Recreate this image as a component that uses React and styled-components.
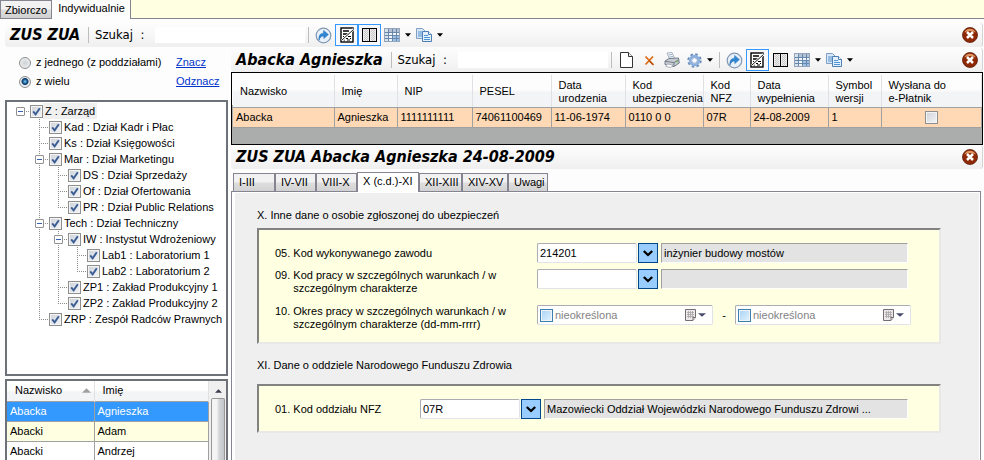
import React from "react";
import styled, { createGlobalStyle, css } from "styled-components";

const GlobalStyle = createGlobalStyle`
  * { box-sizing: border-box; }
  body { margin: 0; background: #fff; }
  body, input, button, table {
    font-family: "Liberation Sans", Arial, sans-serif;
    font-size: 11px;
    line-height: 13px;
    color: #000;
  }
`;

const tick =
  "url(\"data:image/svg+xml,%3Csvg xmlns='http://www.w3.org/2000/svg' viewBox='0 0 9 9'%3E%3Cpath d='M1.2 4.4L3.6 7.4L7.8 1.2' fill='none' stroke='%23395d95' stroke-width='1.9'/%3E%3C/svg%3E\")";

/* ---------- shell ---------- */

const Shell = styled.div`
  display: flex;
  flex-direction: column;
  height: 100vh;
  overflow: hidden;
  background: #fdfdfd;
`;

const PageTabs = styled.nav`
  display: flex;
  align-items: stretch;
  height: 19px;
  flex: none;
  background: #ffffe1;
`;

const PageTab = styled.button`
  border: 0 solid #848590;
  border-bottom-width: ${(p) => (p.$active ? 0 : "1px")};
  border-left-width: ${(p) => (p.$active ? 0 : "1px")};
  border-right-width: 1px;
  border-top-width: ${(p) => (p.$active ? 0 : "1px")};
  padding: ${(p) => (p.$active ? "0 5px 2px 6px" : "1px 4px 0")};
  background: ${(p) => (p.$active ? "#fdfdfd" : "linear-gradient(#f2f2f2 45%, #dcdcdc 55%, #d0d0d0)")};
`;

const PageTabsFill = styled.div`
  flex: 1;
  border-bottom: 1px solid #848590;
`;

const Body = styled.div`
  display: flex;
  flex: 1;
  min-height: 0;
`;

const Side = styled.aside`
  display: flex;
  flex-direction: column;
  flex: none;
  width: 231px;
  padding: 5px 3px 0 5px;
`;

const Main = styled.main`
  display: flex;
  flex-direction: column;
  flex: 1;
  min-width: 0;
`;

/* ---------- toolbar ---------- */

const Bar = styled.header`
  display: flex;
  align-items: center;
  flex: none;
  height: 24px;
  margin: ${(p) => (p.$outer ? "4px 1px 1px 5px" : "0 1px 0 0")};
  padding: 0 1px 0 5px;
  background: linear-gradient(#fdfdfd, #f7f7f7 50%, #efefef);
  border-right: 1px solid #d4d4d4;
  border-radius: 3px;
`;

const Title = styled.h2`
  margin: 0;
  padding-right: 2px;
  font: italic bold 16px/22px "DejaVu Sans Condensed", "DejaVu Sans", sans-serif;
  white-space: nowrap;
`;

const Divider = styled.span`
  flex: none;
  width: 1px;
  height: 16px;
  margin: 0 ${(p) => (p.$wide ? 6 : 3)}px;
  background: #bdbdbd;
`;

const SearchLabel = styled.label`
  font: 13px/16px "DejaVu Sans Condensed", "DejaVu Sans", sans-serif;
  white-space: pre;
`;

const SearchInput = styled.input`
  flex: none;
  width: 150px;
  height: 16px;
  margin-left: 11px;
  padding: 0 2px;
  border: 0;
  background: #fff;
`;

const ToolButton = styled.button`
  display: flex;
  align-items: center;
  justify-content: center;
  flex: none;
  width: 23px;
  height: 22px;
  padding: 0;
  border: 1px solid ${(p) => (p.$on ? "#3399ff" : "transparent")};
  background: ${(p) => (p.$on ? "#f6f8fb" : "transparent")};
`;

const MenuButton = styled(ToolButton)`
  width: 32px;
  gap: 5px;
`;

const Spacer = styled.span`
  flex: 1;
`;

/* ---------- filter and tree ---------- */

const Filter = styled.div`
  display: grid;
  grid-template-columns: 157px auto;
  grid-auto-rows: 19px;
  align-items: center;
  flex: none;
  padding: 0 0 9px 14px;
`;

const RadioLabel = styled.label`
  display: flex;
  align-items: center;
  gap: 5px;
  white-space: nowrap;
`;

const Radio = styled.input`
  appearance: none;
  flex: none;
  width: 12px;
  height: 12px;
  margin: 0;
  border: 1px solid #8e8f8f;
  border-radius: 50%;
  background: radial-gradient(#cfd3d6, #f4f4f4);
  &:checked {
    background: radial-gradient(circle at 50% 45%, #7fd0f2 0, #1e5f9c 2px, #12395f 3px, #e6ebef 4px);
  }
`;

const Link = styled.a`
  color: #0033cc;
  text-decoration: underline;
`;

const Check = styled.input`
  appearance: none;
  flex: none;
  width: 13px;
  height: 13px;
  margin: 0;
  border: 1px solid ${(p) => (p.$blue ? "#3c7fb1" : "#8e8f8f")};
  box-shadow: inset 0 0 0 1px #f4f4f4;
  background: ${(p) =>
    p.$blue ? "linear-gradient(135deg, #a8d2f5, #e2f4ff)" : "linear-gradient(135deg, #cdd2d8, #f4f5f6)"};
  &:checked {
    background: ${tick} center / 9px 9px no-repeat, linear-gradient(135deg, #cdd2d8, #f4f5f6);
  }
`;

const TreeBox = styled.div`
  flex: none;
  height: 276px;
  padding: 1px 0 0 9px;
  border: 2px solid #6d7278;
  background: #fff;
`;

const dots = (dir) => `repeating-linear-gradient(${dir}, #8c8c8c 0 1px, transparent 1px 2px)`;

const Branch = styled.ul`
  list-style: none;
  margin: 0 0 0 ${(p) => (p.$root ? 0 : "19px")};
  padding: 0;
  ${(p) =>
    !p.$root &&
    css`
      & > li {
        background: ${dots("to bottom")} 4px 0 / 1px 100% no-repeat;
      }
      & > li:last-child {
        background-size: 1px 8px;
      }
    `}
`;

const NodeRow = styled.div`
  display: flex;
  align-items: center;
  height: 16px;
  background: ${dots("to right")} 4px 8px / 10px 1px no-repeat;
`;

const Toggle = styled.button`
  display: flex;
  align-items: center;
  justify-content: center;
  flex: none;
  width: 9px;
  height: 9px;
  margin-right: 5px;
  padding: 0;
  border: 1px solid #919191;
  border-radius: 1px;
  background: #fff;
`;

const NoToggle = styled.span`
  flex: none;
  width: 14px;
`;

const NodeLabel = styled.label`
  display: flex;
  align-items: center;
  white-space: nowrap;
`;

const NodeText = styled.span`
  padding: 1px 2px;
  line-height: 14px;
  background: ${(p) => (p.$current ? "#f0f0f0" : "transparent")};
`;

/* ---------- people list ---------- */

const ListBox = styled.div`
  display: flex;
  flex: 1;
  min-height: 0;
  overflow: hidden;
  margin-top: 3px;
  border: 2px solid #6d7278;
  border-bottom: 0;
  background: #fff;
`;

const List = styled.table`
  flex: 1;
  align-self: flex-start;
  table-layout: fixed;
  width: 100%;
  border-collapse: collapse;
  th {
    height: 20px;
    padding: 0 3px 0 8px;
    border-right: 1px solid #dfe1e4;
    background: linear-gradient(#fff 45%, #f3f4f6 55%);
    font-weight: normal;
    text-align: left;
  }
  td {
    height: 20px;
    padding: 0 3px;
    border: 1px solid #a0a0a0;
    border-left: 0;
  }
`;

const ListRow = styled.tr`
  background: ${(p) => (p.$selected ? "#3399ff" : p.$tinted ? "#ffffe1" : "#fff")};
  color: ${(p) => (p.$selected ? "#fff" : "#000")};
`;

const SortHead = styled.span`
  display: flex;
  align-items: center;
  justify-content: space-between;
`;

const Scroll = styled.div`
  display: flex;
  flex-direction: column;
  flex: none;
  width: 17px;
  padding: 0 1px 0 2px;
  background: #f0f0f0;
`;

const ScrollUp = styled.button`
  height: 17px;
  padding: 0;
  border: 0;
  background: transparent;
`;

const ScrollThumb = styled.div`
  flex: 1;
  border: 1px solid #979797;
  border-bottom: 0;
  border-radius: 2px 2px 0 0;
  background: linear-gradient(to right, #f4f4f4 40%, #d2d4d6 60%, #c4c7ca);
`;

/* ---------- records grid ---------- */

const RecordsBox = styled.div`
  flex: none;
  height: 73px;
  margin-right: 1px;
  border: 1px solid #000;
  padding: 2px 0 0 1px;
  background: linear-gradient(#fdfdfd 32px, #abadac 32px);
`;

const Records = styled.table`
  width: 100%;
  table-layout: fixed;
  border-collapse: collapse;
  white-space: nowrap;
  th {
    height: 32px;
    padding: 2px 0 0 7px;
    border-right: 1px solid #dfe1e4;
    border-bottom: 1px solid #a0a0a0;
    background: linear-gradient(#fdfdfd 45%, #f3f4f6 55%);
    font-weight: normal;
    text-align: left;
    white-space: pre-line;
  }
  td {
    height: 20px;
    padding: 0 3px;
    border-right: 1px solid #a0a0a0;
    border-bottom: 1px solid #a0a0a0;
    background: #ffd8b5;
  }
  td:last-child {
    text-align: center;
    line-height: 0;
  }
`;

const Col = styled.col`
  width: ${(p) => (p.$w ? `${p.$w}px` : "auto")};
`;

/* ---------- record form ---------- */

const FormTabs = styled.nav`
  display: flex;
  align-items: flex-end;
  flex: none;
  height: 22px;
  padding-left: 2px;
`;

const FormTab = styled.button`
  width: ${(p) => p.$w}px;
  height: ${(p) => (p.$active ? "20px" : "18px")};
  margin-bottom: ${(p) => (p.$active ? "-1px" : 0)};
  padding: 0 0 ${(p) => (p.$active ? "2px" : 0)} 5px;
  border: 1px solid #848590;
  border-bottom: 0;
  background: ${(p) => (p.$active ? "#fff" : "linear-gradient(#f2f2f2 45%, #dddddd 55%, #d2d2d2)")};
  text-align: left;
  white-space: nowrap;
  z-index: ${(p) => (p.$active ? 1 : 0)};
`;

const FormPage = styled.section`
  flex: 1;
  margin-right: 3px;
  padding: 17px 39px 0 22px;
  border: 1px solid #848590;
  border-bottom: 0;
  background: #efefef;
  box-shadow: inset 3px 0 0 #fff, inset -1px 1px 0 #fff;
`;

const Caption = styled.h3`
  margin: 0 0 ${(p) => p.$gap}px 3px;
  font-size: 11px;
  font-weight: normal;
  line-height: 13px;
`;

const Group = styled.div`
  display: flex;
  flex-direction: column;
  margin: 0 0 ${(p) => (p.$last ? 0 : "15px")} 3px;
  padding: 13px 31px ${(p) => (p.$last ? "12px" : "17px")} 16px;
  border: 2px solid;
  border-color: #828282 #e8e8e8 #e8e8e8 #828282;
  background: #ffffe1;
`;

const FieldRow = styled.div`
  display: flex;
  align-items: flex-start;
  height: ${(p) => p.$h}px;
`;

const FieldLabel = styled.label`
  display: flex;
  flex: none;
  gap: 3px;
  width: ${(p) => p.$w}px;
  padding-top: ${(p) => (p.$two ? 0 : "4px")};
  white-space: pre-line;
`;

const Field = styled.input`
  flex: none;
  width: 100px;
  height: 20px;
  padding: 0 2px;
  border: 1px solid;
  border-color: #abadb3 #e2e3ea #e2e3ea #abadb3;
  border-radius: 2px;
  background: #fff;
`;

const ReadOnly = styled.input`
  flex: 1;
  min-width: 0;
  height: 20px;
  margin-left: 3px;
  padding: 0 2px;
  border: 1px solid;
  border-color: #a0a0a0 #fff #fff #a0a0a0;
  background: #e2e3e2;
`;

const DropButton = styled.button`
  display: flex;
  align-items: center;
  justify-content: center;
  flex: none;
  width: 20px;
  height: 20px;
  margin-left: 1px;
  padding: 0;
  border: 1px solid #00478c;
  background: #99ccff;
`;

const DateBox = styled.div`
  display: flex;
  align-items: center;
  flex: none;
  width: 176px;
  height: 20px;
  padding: 0 6px 0 2px;
  border: 1px solid;
  border-color: #abadb3 #e2e3ea #e2e3ea #abadb3;
  border-radius: 2px;
  background: #fff;
`;

const DateInput = styled.input`
  flex: 1;
  min-width: 0;
  padding: 0 2px;
  border: 0;
  background: transparent;
  color: #838383;
`;

const DateButton = styled.button`
  display: flex;
  align-items: center;
  gap: 2px;
  padding: 0;
  border: 0;
  background: transparent;
`;

const Dash = styled.span`
  flex: none;
  width: 22px;
  padding-top: 4px;
  text-align: center;
`;

/* ---------- icons ---------- */

const RefreshIcon = () => (
  <svg width="17" height="17" viewBox="0 0 17 17" aria-hidden="true">
    <circle cx="8.5" cy="8.5" r="7.3" fill="#e9f1fa" stroke="#8498b4" strokeWidth="1.2" />
    <path d="M4 13.2C3.6 8.6 5 6.4 8.6 6.2V3.4L13.4 7.6L8.8 11.6V9C6.4 9 5 10.2 4 13.2Z" fill="#2f87d4" stroke="#1c68b4" strokeWidth=".5" />
  </svg>
);

const FormIcon = () => (
  <svg width="14" height="16" viewBox="0 0 14 16" aria-hidden="true">
    <rect x="1" y="1" width="12" height="14" fill="#fff" stroke="#000" strokeWidth="1.4" />
    <path d="M3 4H9M3 7H8" stroke="#000" strokeWidth="1.6" />
    <path d="M8 9.5H11M3 9.5H4M6 11.5H8M10 11.5H11M3 13H5M7 13H10" stroke="#000" />
    <path d="M13.5 2L2 13.5" stroke="#fff" strokeWidth="2.4" />
    <path d="M13.5 2.5L2 13" stroke="#000" strokeWidth=".9" />
  </svg>
);

const SplitIcon = () => (
  <svg width="15" height="14" viewBox="0 0 15 14" shapeRendering="crispEdges" aria-hidden="true">
    <rect x="0" y="0" width="15" height="14" fill="#000" />
    <rect x="1" y="1" width="6" height="12" fill="#ececec" />
    <rect x="8" y="1" width="6" height="12" fill="#ececec" />
    <path d="M2.5 1V13M4.5 1V13M9.5 1V13M11.5 1V13" stroke="#c8c8c8" strokeDasharray="1 1" />
    <path d="M3.5 2V13M5.5 2V13M10.5 2V13M12.5 2V13" stroke="#c8c8c8" strokeDasharray="1 1" />
  </svg>
);

const TableIcon = () => (
  <svg width="16" height="14" viewBox="0 0 16 14" aria-hidden="true">
    <rect x=".5" y=".5" width="15" height="13" fill="#f3f7fc" stroke="#93a5bd" />
    <path d="M1 1H15V4H1Z" fill="#b4c2d4" />
    <path d="M1 1H4V13H1Z" fill="#d9e1ea" />
    <path d="M9 7H15V13H9Z" fill="#9dc0e6" />
    <path d="M4.5 1V13M8.5 1V13M12.5 1V13M1 4.5H15M1 7.5H15M1 10.5H15" stroke="#6887ac" />
  </svg>
);

const CopyIcon = () => (
  <svg width="16" height="14" viewBox="0 0 16 14" aria-hidden="true">
    <path d="M.5 .5H6.5L9.5 3.5V10.5H.5Z" fill="#d6e7f8" stroke="#7f9fc4" />
    <path d="M2 4H6M2 6H6M2 8H6" stroke="#5b93cb" />
    <path d="M6.5 3.5H12.5L15.5 6.5V13.5H6.5Z" fill="#e4f0fb" stroke="#4d7fb4" />
    <path d="M12.5 3.5V6.5H15.5" fill="#fff" stroke="#4d7fb4" />
    <path d="M8 7.5H12M8 9.5H14M8 11.5H14" stroke="#4f95d6" />
  </svg>
);

const PageIcon = () => (
  <svg width="13" height="16" viewBox="0 0 13 16" aria-hidden="true">
    <path d="M.5 .5H8.5L12.5 4.5V15.5H.5Z" fill="#fff" stroke="#333" />
    <path d="M8.5 .5V4.5H12.5" fill="#eee" stroke="#333" />
  </svg>
);

const DeleteIcon = () => (
  <svg width="11" height="11" viewBox="0 0 11 11" aria-hidden="true">
    <path d="M1.5 1.5L9 9.5M9 1.5L1.5 9.5" stroke="#dd6b14" strokeWidth="1.8" />
    <path d="M5 5.5L9.5 10" stroke="#b84d08" strokeWidth="1.2" />
  </svg>
);

const PrintIcon = () => (
  <svg width="16" height="16" viewBox="0 0 16 16" aria-hidden="true">
    <path d="M3 1L8 .5L10.5 6L6 8Z" fill="#f5f8fb" stroke="#a9b3bf" />
    <path d="M4.5 3L8 2.4M5.3 5L9 4.4" stroke="#9fb6ce" />
    <path d="M1 9L5 6.5L14.5 6L15.3 11L10 14.5L1 12.5Z" fill="#c6cbd3" stroke="#747d8a" />
    <path d="M1 9.2L10 10.6L15 7.5M10 10.6V14" stroke="#777f8b" fill="none" />
    <path d="M3 12L9 13L7 15.5L2 14.5Z" fill="#fff" stroke="#929aa5" strokeWidth=".7" />
    <circle cx="13" cy="9.6" r=".9" fill="#73bd50" />
  </svg>
);

const GearIcon = () => (
  <svg width="15" height="15" viewBox="0 0 15 15" aria-hidden="true">
    <circle cx="7.5" cy="7.5" r="6.2" fill="none" stroke="#6d8fc0" strokeWidth="2" strokeDasharray="2.6 2.27" />
    <circle cx="7.5" cy="7.5" r="4.4" fill="#fff" stroke="#8cb0dd" strokeWidth="2.6" />
    <circle cx="7.5" cy="7.5" r="2.8" fill="#f7faff" stroke="#6588bb" strokeWidth=".7" />
  </svg>
);

const CloseIcon = () => (
  <svg width="16" height="16" viewBox="0 0 16 16" aria-hidden="true">
    <circle cx="8" cy="8" r="7.5" fill="#8e2806" stroke="#5f1d0a" strokeWidth=".8" />
    <path d="M2.2 5.5A6.3 6.3 0 0 1 13.8 5.5Q8 2.5 2.2 5.5Z" fill="#dc9460" />
    <path d="M5 5L11 11M11 5L5 11" stroke="#fff" strokeWidth="2.5" />
  </svg>
);

const Caret = ({ color = "#000", size = 6 }) => (
  <svg width={size} height="4" viewBox="0 0 6 4" preserveAspectRatio="none" aria-hidden="true">
    <path d="M0 .3H6L3 3.7Z" fill={color} />
  </svg>
);

const UpCaret = ({ color, width, height }) => (
  <svg width={width} height={height} viewBox="0 0 8 4" aria-hidden="true">
    <path d="M0 4L4 0L8 4Z" fill={color} />
  </svg>
);

const MinusIcon = () => (
  <svg width="5" height="1" viewBox="0 0 5 1" aria-hidden="true">
    <path d="M0 .5H5" stroke="#3a5fae" />
  </svg>
);

const ChevronIcon = () => (
  <svg width="10" height="7" viewBox="0 0 10 7" aria-hidden="true">
    <path d="M.8 1L5 5L9.2 1" fill="none" stroke="#000" strokeWidth="2.3" />
  </svg>
);

const CalendarIcon = () => (
  <svg width="11" height="12" viewBox="0 0 11 12" aria-hidden="true">
    <path d="M.5 .5H10.5V8.5L8 11.5H.5Z" fill="#ece9e9" stroke="#756d70" />
    <path d="M2 3.5H9M2 5.5H9M2 7.5H9M3.5 2V9M5.5 2V9M7.5 2V9" stroke="#aaa5a6" strokeWidth=".8" />
    <path d="M8 11V8.5H10.5" fill="#fff" stroke="#756d70" />
  </svg>
);

/* ---------- composition ---------- */

const ViewTools = ({ splitOn }) => (
  <>
    <Divider />
    <ToolButton aria-label="Odśwież"><RefreshIcon /></ToolButton>
    <ToolButton aria-label="Formularz" $on><FormIcon /></ToolButton>
    <ToolButton aria-label="Podział" $on={splitOn}><SplitIcon /></ToolButton>
    <MenuButton aria-label="Tabela"><TableIcon /><Caret /></MenuButton>
    <MenuButton aria-label="Kopiuj"><CopyIcon /><Caret /></MenuButton>
  </>
);

const CloseButton = () => (
  <>
    <Spacer />
    <ToolButton aria-label="Zamknij"><CloseIcon /></ToolButton>
  </>
);

const Search = ({ id }) => (
  <>
    <Divider $wide />
    <SearchLabel htmlFor={id}>{"Szukaj  :"}</SearchLabel>
    <SearchInput id={id} />
  </>
);

const tree = [
  {
    name: "Z : Zarząd",
    current: true,
    children: [
      { name: "Kad : Dział Kadr i Płac" },
      { name: "Ks : Dział Księgowości" },
      {
        name: "Mar : Dział Marketingu",
        children: [
          { name: "DS : Dział Sprzedaży" },
          { name: "Of : Dział Ofertowania" },
          { name: "PR : Dział Public Relations" },
        ],
      },
      {
        name: "Tech : Dział Techniczny",
        children: [
          {
            name: "IW : Instystut Wdrożeniowy",
            children: [{ name: "Lab1 : Laboratorium 1" }, { name: "Lab2 : Laboratorium 2" }],
          },
          { name: "ZP1 : Zakład Produkcyjny 1" },
          { name: "ZP2 : Zakład Produkcyjny 2" },
        ],
      },
      { name: "ZRP : Zespół Radców Prawnych" },
    ],
  },
];

const Tree = ({ nodes, root }) => (
  <Branch $root={root}>
    {nodes.map((n) => (
      <li key={n.name}>
        <NodeRow>
          {n.children ? <Toggle aria-label={`Zwiń ${n.name}`}><MinusIcon /></Toggle> : <NoToggle />}
          <NodeLabel>
            <Check type="checkbox" defaultChecked />
            <NodeText $current={n.current}>{n.name}</NodeText>
          </NodeLabel>
        </NodeRow>
        {n.children && <Tree nodes={n.children} />}
      </li>
    ))}
  </Branch>
);

const people = [
  ["Abacka", "Agnieszka"],
  ["Abacki", "Adam"],
  ["Abacki", "Andrzej"],
];

const columns = [
  ["Nazwisko", 101, "Abacka"],
  ["Imię", 63, "Agnieszka"],
  ["NIP", 75, "1111111111"],
  ["PESEL", 79, "74061100469"],
  ["Data\nurodzenia", 74, "11-06-1974"],
  ["Kod\nubezpieczenia", 78, "0110 0 0"],
  ["Kod\nNFZ", 47, "07R"],
  ["Data\nwypełnienia", 78, "24-08-2009"],
  ["Symbol\nwersji", 53, "1"],
  ["Wysłana do\ne-Płatnik", null, null],
];

const formTabs = [
  ["I-III", 42],
  ["IV-VII", 41],
  ["VIII-X", 41],
  ["X (c.d.)-XI", 62],
  ["XII-XIII", 43],
  ["XIV-XV", 46],
  ["Uwagi", 40],
];

const CodeField = ({ id, code, text, name }) => (
  <>
    <Field id={id} defaultValue={code} />
    <DropButton aria-label={`Wybierz: ${name}`}><ChevronIcon /></DropButton>
    <ReadOnly readOnly value={text} aria-label={`Opis: ${name}`} />
  </>
);

const DateField = ({ id, name }) => (
  <DateBox>
    <Check type="checkbox" $blue aria-label={`${name} określona`} />
    <DateInput id={id} defaultValue="nieokreślona" aria-label={name} />
    <DateButton aria-label={`Kalendarz: ${name}`}>
      <CalendarIcon />
      <Caret color="#4a4a6c" size={8} />
    </DateButton>
  </DateBox>
);

export default function App() {
  return (
    <Shell>
      <GlobalStyle />
      <PageTabs>
        <PageTab>Zbiorczo</PageTab>
        <PageTab $active>Indywidualnie</PageTab>
        <PageTabsFill />
      </PageTabs>
      <Bar $outer>
        <Title as="h1">ZUS ZUA</Title>
        <Search id="search-all" />
        <ViewTools splitOn />
        <CloseButton />
      </Bar>
      <Body>
        <Side>
          <Filter>
            <RadioLabel><Radio type="radio" name="scope" />z jednego (z poddziałami)</RadioLabel>
            <div><Link href="#znacz">Znacz</Link></div>
            <RadioLabel><Radio type="radio" name="scope" defaultChecked />z wielu</RadioLabel>
            <div><Link href="#odznacz">Odznacz</Link></div>
          </Filter>
          <TreeBox><Tree nodes={tree} root /></TreeBox>
          <ListBox>
            <List>
              <colgroup><Col $w={87} /><Col /></colgroup>
              <thead>
                <tr>
                  <th><SortHead>Nazwisko<UpCaret color="#a0a0a0" width="9" height="5" /></SortHead></th>
                  <th>Imię</th>
                </tr>
              </thead>
              <tbody>
                {people.map(([last, first], i) => (
                  <ListRow key={first} $selected={i === 0} $tinted={i % 2 === 1}>
                    <td>{last}</td>
                    <td>{first}</td>
                  </ListRow>
                ))}
              </tbody>
            </List>
            <Scroll>
              <ScrollUp aria-label="W górę"><UpCaret color="#3c3c4c" width="7" height="4" /></ScrollUp>
              <ScrollThumb />
            </Scroll>
          </ListBox>
        </Side>
        <Main>
          <Bar>
            <Title>Abacka Agnieszka</Title>
            <Search id="search-person" />
            <Divider />
            <ToolButton aria-label="Nowy"><PageIcon /></ToolButton>
            <ToolButton aria-label="Usuń"><DeleteIcon /></ToolButton>
            <ToolButton aria-label="Drukuj"><PrintIcon /></ToolButton>
            <MenuButton aria-label="Czynności"><GearIcon /><Caret /></MenuButton>
            <ViewTools />
            <CloseButton />
          </Bar>
          <RecordsBox>
            <Records>
              <colgroup>{columns.map(([name, w]) => <Col key={name} $w={w} />)}</colgroup>
              <thead>
                <tr>{columns.map(([name]) => <th key={name}>{name}</th>)}</tr>
              </thead>
              <tbody>
                <tr>
                  {columns.map(([name, , value]) => (
                    <td key={name}>{value ?? <Check type="checkbox" aria-label="Wysłana do e-Płatnik" />}</td>
                  ))}
                </tr>
              </tbody>
            </Records>
          </RecordsBox>
          <Bar>
            <Title>ZUS ZUA Abacka Agnieszka 24-08-2009</Title>
            <CloseButton />
          </Bar>
          <FormTabs>
            {formTabs.map(([name, w]) => (
              <FormTab key={name} $w={w} $active={name === "X (c.d.)-XI"}>{name}</FormTab>
            ))}
          </FormTabs>
          <FormPage>
            <Caption $gap={6}>X. Inne dane o osobie zgłoszonej do ubezpieczeń</Caption>
            <Group>
              <FieldRow $h={26}>
                <FieldLabel htmlFor="job" $w={262}><span>05.</span><span>Kod wykonywanego zawodu</span></FieldLabel>
                <CodeField id="job" code="214201" text="inżynier budowy mostów" name="kod zawodu" />
              </FieldRow>
              <FieldRow $h={36}>
                <FieldLabel htmlFor="work" $w={262} $two>
                  <span>09.</span><span>{"Kod pracy w szczególnych warunkach / w\nszczególnym charakterze"}</span>
                </FieldLabel>
                <CodeField id="work" code="" text="" name="kod pracy" />
              </FieldRow>
              <FieldRow $h={20}>
                <FieldLabel htmlFor="from" $w={262} $two>
                  <span>10.</span><span>{"Okres pracy w szczególnych warunkach / w\nszczególnym charakterze (dd-mm-rrrr)"}</span>
                </FieldLabel>
                <DateField id="from" name="Data od" />
                <Dash>-</Dash>
                <DateField id="to" name="Data do" />
              </FieldRow>
            </Group>
            <Caption $gap={12}>XI. Dane o oddziele Narodowego Funduszu Zdrowia</Caption>
            <Group $last>
              <FieldRow $h={20}>
                <FieldLabel htmlFor="nfz" $w={145}><span>01.</span><span>Kod oddziału NFZ</span></FieldLabel>
                <CodeField
                  id="nfz"
                  code="07R"
                  text="Mazowiecki Oddział Wojewódzki Narodowego Funduszu Zdrowi ..."
                  name="oddział NFZ"
                />
              </FieldRow>
            </Group>
          </FormPage>
        </Main>
      </Body>
    </Shell>
  );
}
